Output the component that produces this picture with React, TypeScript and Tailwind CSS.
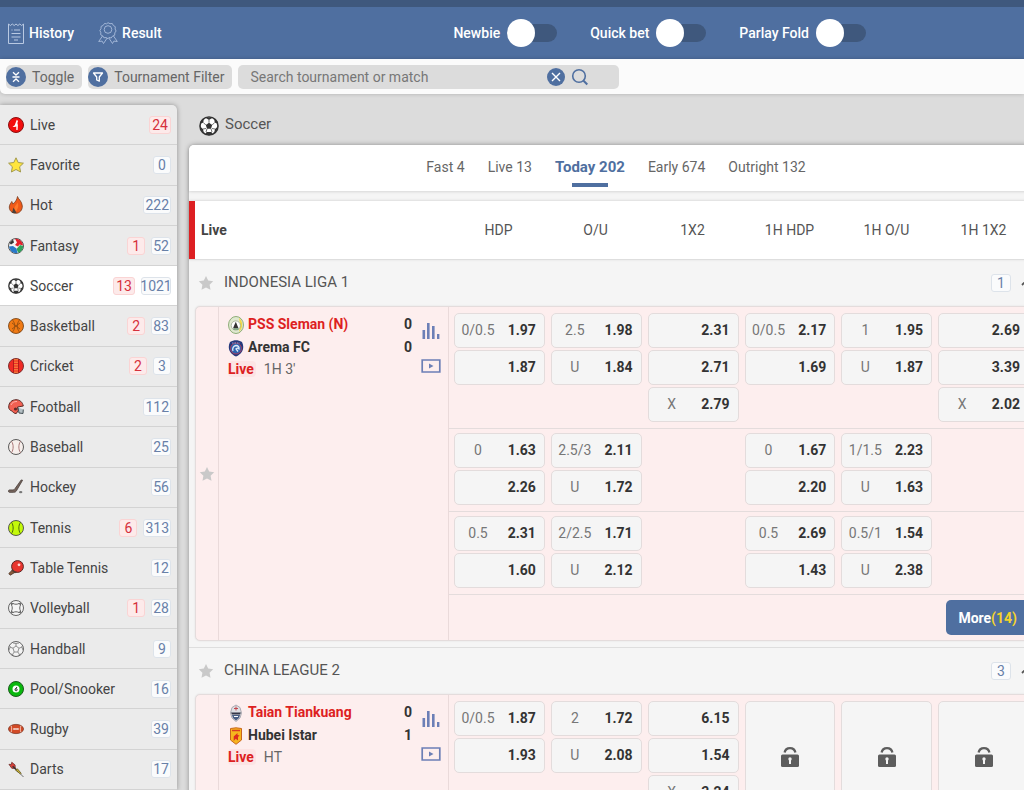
import type { ReactNode } from 'react';

type Odd = [string, string];
type Column = Odd[] | 'locked';

const sports: { label: string; icon: ReactNode; total?: number; live?: number }[] = [
  { label: 'Live', icon: <LiveIcon />, live: 24 },
  { label: 'Favorite', icon: <FavoriteIcon />, total: 0 },
  { label: 'Hot', icon: <HotIcon />, total: 222 },
  { label: 'Fantasy', icon: <FantasyIcon />, live: 1, total: 52 },
  { label: 'Soccer', icon: <SoccerIcon className="size-4" />, live: 13, total: 1021 },
  { label: 'Basketball', icon: <BasketballIcon />, live: 2, total: 83 },
  { label: 'Cricket', icon: <CricketIcon />, live: 2, total: 3 },
  { label: 'Football', icon: <FootballIcon />, total: 112 },
  { label: 'Baseball', icon: <SeamBallIcon fill="#f7efec" seam="#a06a6a" />, total: 25 },
  { label: 'Hockey', icon: <HockeyIcon />, total: 56 },
  { label: 'Tennis', icon: <SeamBallIcon fill="#c4fa0a" seam="#3c5a10" />, live: 6, total: 313 },
  { label: 'Table Tennis', icon: <TableTennisIcon />, total: 12 },
  { label: 'Volleyball', icon: <VolleyballIcon />, live: 1, total: 28 },
  { label: 'Handball', icon: <HandballIcon />, total: 9 },
  { label: 'Pool/Snooker', icon: <PoolIcon />, total: 16 },
  { label: 'Rugby', icon: <RugbyIcon />, total: 39 },
  { label: 'Darts', icon: <DartsIcon />, total: 17 },
];

const tabs = ['Fast 4', 'Live 13', 'Today 202', 'Early 674', 'Outright 132'];
const markets = ['HDP', 'O/U', '1X2', '1H HDP', '1H O/U', '1H 1X2'];

const leagues: {
  name: string;
  count: number;
  teams: { name: string; score: number; crest: ReactNode }[];
  clock: string;
  more?: number;
  lines: Column[][];
}[] = [
  {
    name: 'INDONESIA LIGA 1',
    count: 1,
    teams: [
      { name: 'PSS Sleman (N)', score: 0, crest: <SlemanCrest /> },
      { name: 'Arema FC', score: 0, crest: <AremaCrest /> },
    ],
    clock: "1H 3'",
    more: 14,
    lines: [
      [
        [['0/0.5', '1.97'], ['', '1.87']],
        [['2.5', '1.98'], ['U', '1.84']],
        [['', '2.31'], ['', '2.71'], ['X', '2.79']],
        [['0/0.5', '2.17'], ['', '1.69']],
        [['1', '1.95'], ['U', '1.87']],
        [['', '2.69'], ['', '3.39'], ['X', '2.02']],
      ],
      [
        [['0', '1.63'], ['', '2.26']],
        [['2.5/3', '2.11'], ['U', '1.72']],
        [],
        [['0', '1.67'], ['', '2.20']],
        [['1/1.5', '2.23'], ['U', '1.63']],
        [],
      ],
      [
        [['0.5', '2.31'], ['', '1.60']],
        [['2/2.5', '1.71'], ['U', '2.12']],
        [],
        [['0.5', '2.69'], ['', '1.43']],
        [['0.5/1', '1.54'], ['U', '2.38']],
        [],
      ],
    ],
  },
  {
    name: 'CHINA LEAGUE 2',
    count: 3,
    teams: [
      { name: 'Taian Tiankuang', score: 0, crest: <TaianCrest /> },
      { name: 'Hubei Istar', score: 1, crest: <HubeiCrest /> },
    ],
    clock: 'HT',
    lines: [
      [
        [['0/0.5', '1.87'], ['', '1.93']],
        [['2', '1.72'], ['U', '2.08']],
        [['', '6.15'], ['', '1.54'], ['X', '3.24']],
        'locked',
        'locked',
        'locked',
      ],
    ],
  },
];

export default function App() {
  return (
    <div className="h-screen overflow-hidden flex flex-col bg-[#dcdcdc] font-['Roboto',sans-serif] text-sm text-[#444]">
      <Header />
      <FilterBar />
      <div className="flex flex-1 min-h-0 gap-3 pt-[11px]">
        <Sidebar />
        <main className="flex-1 min-w-[854px]">
          <h1 className="h-10 flex items-center gap-1.5 pl-2.5 text-[15px] text-[#555]">
            <SoccerIcon className="size-5 mt-0.5" />
            Soccer
          </h1>
          <div className="bg-[#f5f5f5] rounded-t-[5px] shadow-[0_0_5px_rgba(0,0,0,0.35)]">
            <Tabs />
            <div className="mt-2.5 h-[58px] flex items-center bg-white border-l-6 border-[#dd1f22] shadow-[0_0_3px_rgba(0,0,0,0.18)]">
              <h2 className="w-[253px] shrink-0 pl-1.5 font-bold">Live</h2>
              <div className="flex-1 grid grid-cols-6 gap-1.5 pl-[5px] pr-[14px] text-center text-[#555]">
                {markets.map((m) => (
                  <span key={m}>{m}</span>
                ))}
              </div>
            </div>
            {leagues.map((league) => (
              <League key={league.name} league={league} />
            ))}
          </div>
        </main>
      </div>
    </div>
  );
}

function Header() {
  return (
    <header className="shrink-0 h-[59px] flex items-center justify-between pl-2 pr-[158px] border-t-7 border-[#3f587d] bg-[#4f6fa0] text-white font-medium">
      <nav className="flex gap-6">
        <a href="#history" className="flex items-center gap-[5px]">
          <ReceiptIcon />
          History
        </a>
        <a href="#result" className="flex items-center gap-1">
          <RosetteIcon />
          Result
        </a>
      </nav>
      <div className="flex gap-[33px]">
        {['Newbie', 'Quick bet', 'Parlay Fold'].map((label) => (
          <label key={label} className="flex items-center gap-[7px]">
            {label}
            <input
              type="checkbox"
              role="switch"
              className="appearance-none w-[50px] h-[18px] flex items-center rounded-full bg-[#3f587d] before:content-[''] before:size-7 before:shrink-0 before:rounded-full before:bg-white checked:justify-end"
            />
          </label>
        ))}
      </div>
    </header>
  );
}

function FilterBar() {
  return (
    <div className="shrink-0 h-[35px] flex items-center gap-1.5 px-1.5 bg-[#fbfbfb] rounded-bl-[5px] text-[#666] shadow-[0_0_4px_rgba(0,0,0,0.2)]">
      <button className="h-6 flex items-center gap-1.5 pr-2 rounded-[5px] bg-[#dcdcdc]">
        <span className="size-5 grid place-items-center rounded-full bg-[#4f6fa0]">
          <svg viewBox="0 0 12 12" className="size-3" fill="none" stroke="#fff" strokeWidth="1.3">
            <path d="M3 1.2 6 4l3-2.8M3 10.8 6 8l3 2.8M2.5 6h7" />
          </svg>
        </span>
        Toggle
      </button>
      <button className="h-6 flex items-center gap-1.5 pr-2 rounded-[5px] bg-[#dcdcdc]">
        <span className="size-5 grid place-items-center rounded-full bg-[#4f6fa0]">
          <svg viewBox="0 0 12 12" className="size-3" fill="none" stroke="#fff" strokeWidth="1.3" strokeLinejoin="round">
            <path d="M1.5 2h9L7.3 6v4.2L4.7 9V6z" />
          </svg>
        </span>
        Tournament Filter
      </button>
      <div className="w-[381px] h-6 flex items-center gap-1.5 pl-3 pr-[30px] rounded-[5px] bg-[#dcdcdc]">
        <input
          type="text"
          aria-label="Search tournament or match"
          placeholder="Search tournament or match"
          className="flex-1 min-w-0 bg-transparent outline-none placeholder:text-[#777]"
        />
        <button aria-label="Clear" className="size-[18px] grid place-items-center rounded-full bg-[#4f6fa0]">
          <svg viewBox="0 0 10 10" className="size-2.5" stroke="#fff" strokeWidth="1.4">
            <path d="m1 1 8 8M9 1 1 9" />
          </svg>
        </button>
        <button aria-label="Search">
          <svg viewBox="0 0 18 18" className="size-[18px]" fill="none" stroke="#4f6fa0" strokeWidth="1.6">
            <circle cx="8" cy="8" r="6.3" />
            <path d="m12.5 12.7 3.8 3.8" strokeWidth="2" />
          </svg>
        </button>
      </div>
    </div>
  );
}

function Sidebar() {
  return (
    <nav className="w-[177px] shrink-0 flex flex-col rounded-tr-[5px] bg-[#ebebeb] shadow-[0_0_5px_rgba(0,0,0,0.35)]">
      {sports.map(({ label, icon, live, total }) => (
        <a
          key={label}
          href="#sport"
          className={
            'flex-1 flex items-center gap-1.5 pl-2 pr-1.5 border-b border-[#d3d3d3] ' +
            (label === 'Soccer' ? 'bg-white' : '')
          }
        >
          {icon}
          <span className="flex-1 whitespace-nowrap">{label}</span>
          {live !== undefined && (
            <span className="min-w-[18px] px-0.5 leading-4 text-center rounded-[3px] border border-[#fad4d4] bg-[#fdeaea] text-[#d6303c]">
              {live}
            </span>
          )}
          {total !== undefined && <Count value={total} />}
        </a>
      ))}
    </nav>
  );
}

function Count({ value }: { value: number }) {
  return (
    <span className="min-w-[18px] max-w-[30px] px-px flex justify-center leading-4 rounded-[3px] border border-[#dde3ea] bg-[#fafbfc] text-[#6880a8]">
      {value}
    </span>
  );
}

function Tabs() {
  return (
    <div className="h-[46px] flex justify-center gap-[23px] rounded-t-[5px] bg-white text-[#666] shadow-[0_1px_3px_rgba(0,0,0,0.12)]">
      {tabs.map((tab) =>
        tab === 'Today 202' ? (
          <button key={tab} className="flex flex-col items-center pt-3 text-[15px] leading-5 font-bold text-[#4f6fa0]">
            {tab}
            <span className="mt-1.5 w-9 h-1 bg-[#4f6fa0]" />
          </button>
        ) : (
          <button key={tab} className="flex flex-col pt-3">
            {tab}
          </button>
        ),
      )}
    </div>
  );
}

function League({ league }: { league: (typeof leagues)[number] }) {
  return (
    <section className="px-1.5 pb-1.5 border-t border-[#dedede]">
      <div className="h-[46px] flex items-center pl-[3px] pr-1 text-[15px] text-[#555]">
        <button aria-label={'Favorite ' + league.name}>
          <StarIcon />
        </button>
        <h3 className="flex-1 pl-2.5">{league.name}</h3>
        <span className="w-5 grid text-sm">
          <Count value={league.count} />
        </span>
        <button aria-label="Collapse" className="ml-2.5">
          <svg viewBox="0 0 12 12" className="size-3" fill="none" stroke="#555" strokeWidth="1.8">
            <path d="m1 8 5-5 5 5" />
          </svg>
        </button>
      </div>
      <div className="min-h-[335px] flex rounded-[5px] border border-[#e4dcdc] bg-[#fdeeee] shadow-[0_0_2px_rgba(0,0,0,0.1)]">
        <div className="w-[23px] shrink-0 grid place-items-center border-r border-[#eadada]">
          <button aria-label="Favorite match">
            <StarIcon />
          </button>
        </div>
        <div className="w-[230px] shrink-0 flex items-start gap-[9px] pl-[9px] pr-[7px] pt-[7px] border-r border-[#eadada]">
          <div className="flex-1">
            {league.teams.map((team, i) => (
              <div key={team.name} className="h-[23px] flex gap-1 font-bold">
                <span className="pt-0.5">{team.crest}</span>
                <span className={i === 0 ? 'flex-1 text-[#dd1f22]' : 'flex-1 text-[#333]'}>{team.name}</span>
                <span className="text-[#333]">{team.score}</span>
              </div>
            ))}
            <div className="h-[18px] flex items-center gap-2 text-[#666]">
              <span className="pr-0.5 leading-4 rounded-sm bg-[#fce4e4] font-bold text-[#dd1f22]">Live</span>
              {league.clock}
            </div>
          </div>
          <div className="flex flex-col gap-5 pt-2">
            <button aria-label="Statistics">
              <svg viewBox="0 0 20 17" className="w-5 h-[17px]" fill="#6c7fb6">
                <path d="M1.5 8h2.6v9H1.5zM6 1h2.6v16H6zM11 4h2.6v13H11zM16 12h2.4v5H16z" />
              </svg>
            </button>
            <button aria-label="Watch">
              <svg viewBox="0 0 20 14" className="w-5 h-3.5" fill="none" stroke="#6c7fb6" strokeWidth="1.7">
                <path d="M1.2 1h17.6v12H1.2z" />
                <path d="m8 4.5 4.5 2.5L8 9.5z" fill="#6c7fb6" stroke="none" />
              </svg>
            </button>
          </div>
        </div>
        <div className="flex-1">
          {league.lines.map((line, i) => (
            <div
              key={i}
              className={
                'grid grid-cols-6 gap-1.5 pl-[5px] pr-[7px] pb-1.5 ' +
                (i === 0 ? 'pt-1.5' : 'pt-1 border-t border-[#e4dcdc]')
              }
            >
              {line.map((column, j) => (
                <OddsColumn key={j} column={column} />
              ))}
            </div>
          ))}
          {league.more && (
            <div className="flex justify-end px-[7px] py-[5px] border-t border-[#e4dcdc]">
              <button className="h-[35px] px-3 rounded-[5px] bg-[#4f6fa0] font-bold text-white">
                More<span className="text-[#f4d32c]">({league.more})</span>
              </button>
            </div>
          )}
        </div>
      </div>
    </section>
  );
}

function OddsColumn({ column }: { column: Column }) {
  if (column === 'locked') {
    return (
      <div className="grid place-items-center rounded-[5px] border border-[#e3dcdc] bg-[#f5f5f5]">
        <svg viewBox="0 0 18 22" className="w-[18px] h-[22px]" role="img" aria-label="Locked">
          <path d="M3.600 7.500a5.500 5.500 0 0 1 10.800 0" fill="none" stroke="#5d5d5d" strokeWidth="2.300" />
          <rect y="9.500" width="18" height="12.500" rx="1.500" fill="#5d5d5d" />
          <circle cx="9" cy="14" r="1.700" fill="#f5f5f5" />
          <path d="M8 14h2v5H8z" fill="#f5f5f5" />
        </svg>
      </div>
    );
  }
  return (
    <div className="flex flex-col gap-0.5">
      {column.map(([line, price]) => (
        <button
          key={price}
          className="h-[35px] flex items-center justify-between pl-1.5 pr-2 pb-0.5 rounded-[5px] border border-[#e3dcdc] bg-[#f5f5f5]"
        >
          <span className="w-[34px] text-center whitespace-nowrap text-[#777]">{line}</span>
          <span className="font-bold text-[#333]">{price}</span>
        </button>
      ))}
    </div>
  );
}

function StarIcon() {
  return (
    <svg viewBox="0 0 16 16" className="size-4" fill="#c9c9c9">
      <path d="m8 1 2.200 4.600 5 .7-3.600 3.500.9 5L8 12.400l-4.500 2.400.9-5L.8 6.300l5-.7z" />
    </svg>
  );
}

function ReceiptIcon() {
  return (
    <svg viewBox="0 0 16 21" className="w-4 h-[21px]" fill="none" stroke="#b9c9e2" strokeWidth="1">
      <path d="M.5 1v19.500h15V1l-1.900 1.500L11.800 1 9.900 2.500 8 1 6.200 2.500 4.300 1 2.400 2.500z" />
      <path d="M3.500 7h1M6 7h6M3.500 10.500h9M3.500 14h9M6 17h4" />
    </svg>
  );
}

function RosetteIcon() {
  return (
    <svg viewBox="0 0 20 22" className="w-5 h-[22px]" fill="none" stroke="#a9bcdb" strokeWidth=".9">
      <path d="m10 .7 2 1 2.300-.2 1 2 2 1.200-.2 2.300 1 2-1.300 1.900-.1 2.300-2.200.9-1.300 1.900-2.300-.5L10 16.700l-1.900-1.200-2.200.3-1.100-1.900-2.100-1.100.1-2.300L1.900 8.500 3 6.600l.1-2.200 2.100-1L6.500 1.500l2.200.3z" />
      <circle cx="10" cy="7.500" r="3.800" />
      <path d="m4.500 14-3.800 5.500 3.400-.4 1.400 2.400L9.200 16M15.500 14l3.800 5.500-3.400-.4-1.400 2.400L10.800 16" />
    </svg>
  );
}

function LiveIcon() {
  return (
    <svg viewBox="0 0 16 16" className="size-4 shrink-0">
      <circle cx="8" cy="8" r="7.500" fill="#f30d0d" stroke="#8a1010" />
      <path d="M8.800 2.800 10 4 9.400 6l.5 2.300-.3 4.700H8.300V9.500L6.500 10l-2-.3 2.200-1.400z" fill="#fff" />
    </svg>
  );
}

function FavoriteIcon() {
  return (
    <svg viewBox="0 0 16 16" className="size-4 shrink-0">
      <path
        d="m8 .8 2.200 4.700 5.200.7-3.800 3.600 1 5.200L8 12.500 3.400 15l1-5.200L.6 6.200l5.200-.7z"
        fill="#ffe53d"
        stroke="#a39a4e"
        strokeLinejoin="round"
      />
    </svg>
  );
}

function HotIcon() {
  return (
    <svg viewBox="0 0 16 18" className="w-4 h-[18px] shrink-0">
      <path
        d="M9.500.5c.5 2.500 4.500 4.500 4.800 9.500.2 4-2.600 7.300-6.500 7.300S1.200 14.500 1.300 11C1.400 8.500 3 7 3.800 5.500l1 2.500C7 6.500 9 4 9.500.5z"
        fill="#ef5a1a"
        stroke="#7a3d20"
        strokeWidth=".8"
      />
      <path d="M9.500 6.500c-.5 2-3.500 3.500-3 7 .5 1 1.500 1.500 2 1.500.5-2 3-4 1-8.500z" fill="#ff7a2c" />
      <path d="M5.500 11.500 4 17h4.500z" fill="#4a4038" />
    </svg>
  );
}

function FantasyIcon() {
  return (
    <svg viewBox="0 0 16 16" className="size-4 shrink-0">
      <circle cx="8" cy="8" r="7.500" fill="#f4f4f4" stroke="#555" />
      <path d="M7 .8a7.200 7.200 0 0 1 8 6.700l-3.500-1-1.500 2L7 7l2-2.500z" fill="#e3202b" />
      <path d="M15.200 8a7.200 7.200 0 0 1-5 6.800L8.500 11 12 7z" fill="#2fa35a" />
      <path d="M1 8.500a7.200 7.200 0 0 0 8.500 6.500L8.500 10.500 5 8z" fill="#2878c8" />
      <path d="M1.500 5 5 1.500l1 3-3 2z" fill="#333" />
    </svg>
  );
}

function SoccerIcon({ className }: { className: string }) {
  return (
    <svg viewBox="0 0 20 20" className={className + ' shrink-0'}>
      <circle cx="10" cy="10" r="9" fill="#fff" stroke="#333" strokeWidth="1.600" />
      <path d="m10 6.700 3.200 2.300-1.200 3.800H8L6.800 9z" fill="#333" />
      <path
        d="M6.500 1.700h7L10 4zM1 8l.8-3 3-2.400L4.300 6.500zM19 8l-.8-3-3-2.400.5 3.900zM2.500 14.500 1 10.500l3 2.500 1 4.500zM17.500 14.500l1.500-4-3 2.500-1 4.500zM6.500 18.500l1-2.500h5l1 2.500-3.500.8z"
        fill="#333"
      />
      <path
        d="M10 6.700V4M13.200 9l2.500-2.500M12 12.800l1 3.200M8 12.800 7 16M6.800 9 4.300 6.500M4 13l3-.5M16 13l-3-.5"
        stroke="#333"
        strokeWidth=".7"
      />
    </svg>
  );
}

function BasketballIcon() {
  return (
    <svg viewBox="0 0 16 16" className="size-4 shrink-0" fill="none" stroke="#8a4a10" strokeWidth=".8">
      <circle cx="8" cy="8" r="7.500" fill="#f07a14" stroke="#6a3a10" />
      <path d="M4.500 2c3 3.500 3 8.500 0 12M11.500 2c-3 3.500-3 8.500 0 12M4 5l8 6M12 5l-8 6" />
    </svg>
  );
}

function CricketIcon() {
  return (
    <svg viewBox="0 0 16 16" className="size-4 shrink-0" fill="none">
      <circle cx="8" cy="8" r="7.500" fill="#f02a25" stroke="#7c3030" />
      <path d="M5.500 1v14M10.500 1v14" stroke="#a51b18" strokeWidth=".8" />
      <path d="M7 1v14M9 1v14" stroke="#ffc04a" strokeDasharray="1.500 1" />
    </svg>
  );
}

function FootballIcon() {
  return (
    <svg viewBox="0 0 16 16" className="size-4 shrink-0">
      <path
        d="M.7 8C.7 3.500 4 .7 8 .7c3.800 0 6.500 2.400 7.300 6.300L9.500 8l.8 3.500-2 3c-2 .3-3.300-1.500-4.500-2.500C2 11.500.7 10 .7 8z"
        fill="#f26052"
        stroke="#5c2a26"
      />
      <circle cx="7.500" cy="10" r="1.600" fill="#5c2a26" />
      <path d="m10 8.500 1 5.500 4 .5.300-4" fill="#b4bfc4" stroke="#445055" />
      <path d="M3 6c1-2.500 3-3.500 6-3.500" fill="none" stroke="#ffb3aa" />
    </svg>
  );
}

function SeamBallIcon({ fill, seam }: { fill: string; seam: string }) {
  return (
    <svg viewBox="0 0 16 16" className="size-4 shrink-0" fill="none">
      <circle cx="8" cy="8" r="7.500" fill={fill} stroke="#4a4a4a" strokeWidth=".9" />
      <path d="M3.500 2.200c2.200 3.500 2.200 8 0 11.600M12.500 2.200c-2.200 3.500-2.200 8 0 11.600" stroke={seam} strokeWidth=".9" />
    </svg>
  );
}

function HockeyIcon() {
  return (
    <svg viewBox="0 0 17 16" className="w-4 h-4 shrink-0">
      <path
        d="M15.500.8 9.300 11.500c-.8 1.600-1.800 2.200-3.500 2.200H1.500c-1.300 0-1.400-2.600 0-2.600h4c.8 0 1.300-.3 1.800-1.200L14 .5z"
        fill="#75645c"
        stroke="#443a36"
        strokeWidth=".8"
      />
      <ellipse cx="13.500" cy="13.500" rx="1.800" ry="1.200" fill="#777" />
    </svg>
  );
}

function TableTennisIcon() {
  return (
    <svg viewBox="0 0 16 16" className="size-4 shrink-0">
      <path d="m5 9.500-4.200 4 1.400 1.700 5.300-3.200z" fill="#8a5a3a" stroke="#4c3427" strokeWidth=".8" />
      <circle cx="9.500" cy="6.500" r="5.900" fill="#e8352e" stroke="#5a2a28" />
      <path d="M4 8.500c1.500 2 3.500 3.300 6 3.500l-3 1.300-3.500-2.600z" fill="#5a3a30" />
      <circle cx="11" cy="4.800" r="1.400" fill="#ffd9d5" />
    </svg>
  );
}

function VolleyballIcon() {
  return (
    <svg viewBox="0 0 16 16" className="size-4 shrink-0" fill="none" stroke="#555" strokeWidth=".9">
      <circle cx="8" cy="8" r="7.500" fill="#f6f6f6" />
      <path d="M5 3.500c2 1 4 1 6 0M5 12.500c2-1 4-1 6 0M3.500 5c1 2 1 4 0 6M12.500 5c-1 2-1 4 0 6M3 3l2 .5L3.500 5zM13 3l-2 .5L12.500 5zM3 13l2-.5L3.500 11zM13 13l-2-.5 1.500-1.500z" />
    </svg>
  );
}

function HandballIcon() {
  return (
    <svg viewBox="0 0 16 16" className="size-4 shrink-0" fill="none" stroke="#777" strokeWidth=".8">
      <circle cx="8" cy="8" r="7.500" fill="#f3f3f3" stroke="#444" />
      <path d="m8 5 3 2.200L9.800 11H6.200L5 7.200zM8 5V2.500M11 7.200l2.800-1M9.800 11l1.700 2.500M6.200 11l-1.700 2.500M5 7.200l-2.800-1M5 2l3 .5 3-.5M14 5l-.2 1.200L15 9M2 5l.2 1.200L1 9M3 13l1.500.5 1.500 1.200M13 13l-1.500.5-1.500 1.200" />
    </svg>
  );
}

function PoolIcon() {
  return (
    <svg viewBox="0 0 16 16" className="size-4 shrink-0">
      <circle cx="8" cy="8" r="7.500" fill="#0ab80e" stroke="#1c5c1e" />
      <circle cx="8" cy="8" r="3.500" fill="#fff" />
      <path d="M9 6 7.300 8.200M8.100 7.700a1 1 0 1 1 0 2.100 1 1 0 1 1 0-2.100z" fill="none" stroke="#333" />
    </svg>
  );
}

function RugbyIcon() {
  return (
    <svg viewBox="0 0 17 12" className="w-4 h-3 shrink-0">
      <ellipse cx="8.500" cy="6" rx="8" ry="4.900" fill="#d24a26" stroke="#7a3320" strokeWidth=".8" />
      <path d="M3.300 2.500c.8 2.300.8 4.700 0 7M13.700 2.500c-.8 2.300-.8 4.700 0 7" fill="none" stroke="#f3c9bb" />
      <path d="M5.500 6h6M6.500 5v2M8.500 5v2M10.500 5v2" stroke="#fff" strokeWidth=".8" />
    </svg>
  );
}

function DartsIcon() {
  return (
    <svg viewBox="0 0 17 17" className="w-4 h-[17px] shrink-0">
      <path d="m1 3 2.500.2L4 .8l3.500 2.800.3 3.900L4 7.200z" fill="#d9403a" stroke="#6b2b28" strokeWidth=".8" />
      <path d="m5 5 6 6" stroke="#333" strokeWidth="1.500" />
      <path d="m8 9 2-1.200 4 4.700-.8.9z" fill="#c9b83a" stroke="#5d4d1c" strokeWidth=".8" />
      <path d="m13 13 3.500 3.500" stroke="#666" />
    </svg>
  );
}

function SlemanCrest() {
  return (
    <svg viewBox="0 0 16 18" className="w-4 h-[18px]">
      <ellipse cx="8" cy="9" rx="7.500" ry="8.500" fill="#dfe8cf" stroke="#8fae78" />
      <path d="M11 2c4 2.500 4.500 10 0 14 1-4 1-10 0-14z" fill="#f0d944" />
      <circle cx="7.800" cy="9.500" r="4.600" fill="#fff" stroke="#9aa88e" strokeWidth=".8" />
      <path d="m7.800 5.800 2.700 6.400H5z" fill="#333" />
      <path d="M5.500 13h5" stroke="#3d7d45" />
    </svg>
  );
}

function AremaCrest() {
  return (
    <svg viewBox="0 0 16 18" className="w-4 h-[18px]">
      <path d="M2 3c4-2.500 8-2.500 12 0 2.500 5 1.500 11-6 14.500C.5 14-.5 8 2 3z" fill="#26397c" />
      <circle cx="8" cy="9.500" r="5.500" fill="#2e63ad" stroke="#c03750" strokeWidth=".8" />
      <path d="M5 12c-1-3 .5-5 3-5.500 2 0 3.500 1.500 3 3.500L9.500 9 8 10l2 2.500" fill="none" stroke="#dfe9fa" strokeWidth="1.300" />
      <path d="M4 4h8" stroke="#8ba2d8" strokeDasharray="1.500 1" />
    </svg>
  );
}

function TaianCrest() {
  return (
    <svg viewBox="0 0 16 18" className="w-4 h-[18px]">
      <path d="M4 3.500 8 1l4 2.500L13.500 9 12 14l-4 3.500L4 14 2.500 9z" fill="#dedfe3" stroke="#9a9aa5" strokeWidth=".8" />
      <path d="M3 8.500h10l-1 2H4z" fill="#353748" />
      <path d="M4 11h8l-1 3-3 2.500L5 14z" fill="#4a5f85" />
      <path d="M6 4.500h4M8 2.500v4" stroke="#c2474d" />
      <path d="M6 12.500h4" stroke="#fff" />
    </svg>
  );
}

function HubeiCrest() {
  return (
    <svg viewBox="0 0 16 18" className="w-4 h-[18px]">
      <path d="M2.500 1.500 8 .8l5.500.7V13L8 17.300 2.500 13z" fill="#f6b51e" stroke="#c8641c" />
      <path d="M4 3.500h8" stroke="#d83a22" strokeWidth="1.500" />
      <path d="m9.500 6-3.800 3.500V14l2-2.200L10 13.500V10l1.500-1.500L9.500 8z" fill="#dd2b1e" />
    </svg>
  );
}
